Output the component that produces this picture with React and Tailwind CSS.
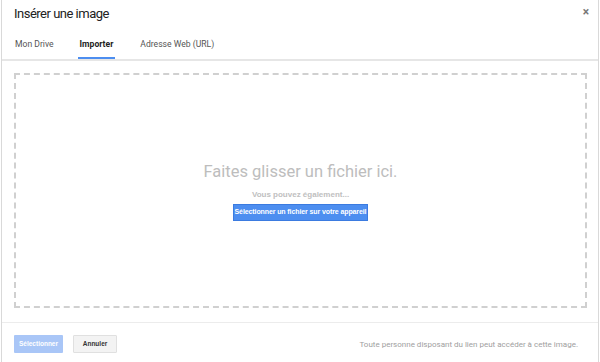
export default function App() {
  return (
    <div className="w-[600px] h-[362px] bg-white overflow-hidden" style={{ fontFamily: 'Roboto, "Liberation Sans", sans-serif' }}>
      <div className="ml-px mr-px h-full border-x border-[#d9d9d9] flex flex-col">
        {/* header */}
        <div className="relative h-[59px]">
          <div className="pl-[12px] pt-[6px] text-[13px] leading-[16px] tracking-[-0.5px] text-[#222]">Insérer une image</div>
          <button className="absolute right-[9px] top-[6px] text-[#777] text-[12px] leading-none font-bold">×</button>
          <div className="flex items-end pl-[13px] mt-[16px] text-[8.6px] leading-[11px] text-[#555]">
            <div className="h-[21px] pt-[1px]">Mon Drive</div>
            <div className="ml-[24px] h-[21px] pt-[1px] font-bold text-[#222] border-b-2 border-[#4d8ef0] px-[2px]">Importer</div>
            <div className="ml-[25px] h-[21px] pt-[1px]">Adresse Web (URL)</div>
          </div>
        </div>
        <div className="h-[2px] bg-[#e6e6e6]"></div>
        {/* body */}
        <div className="px-[12px] pt-[12px]">
          <div className="h-[235px] w-[573px] border-2 border-dashed border-[#d0d0d0] flex flex-col items-center">
            <div className="mt-[87px] text-[16.5px] leading-[20px] text-[#bdbdbd]">Faites glisser un fichier ici.</div>
            <div className="mt-[8px] text-[8px] leading-[10px] font-bold text-[#c0c0c0]" style={{ fontFamily: '"Liberation Sans", Arial, sans-serif' }}>Vous pouvez également...</div>
            <button className="mt-[4px] h-[17px] w-[135px] bg-[#4d8ef0] border border-[#3b7be0] text-white text-[7px] tracking-[-0.1px] font-bold whitespace-nowrap" style={{ fontFamily: '"Liberation Sans", Arial, sans-serif' }}>Sélectionner un fichier sur votre appareil</button>
          </div>
        </div>
        {/* footer */}
        <div className="mt-[14px] h-px bg-[#ececec]"></div>
        <div className="flex items-center pl-[12px] pr-[20px] mt-[12px]" style={{ fontFamily: '"Liberation Sans", Arial, sans-serif' }}>
          <button className="h-[18px] w-[49px] bg-[#a9c6f7] text-white text-[6.5px] font-bold rounded-[1px] whitespace-nowrap">Sélectionner</button>
          <button className="ml-[10px] h-[18px] w-[44px] bg-[#f3f3f3] border border-[#e0e0e0] text-[#333] text-[6.5px] font-bold rounded-[1px]">Annuler</button>
          <div className="ml-auto mt-[2px] text-[8px] text-[#a0a0a0]" style={{ fontFamily: 'Roboto, sans-serif' }}>Toute personne disposant du lien peut accéder à cette image.</div>
        </div>
      </div>
    </div>
  );
}
